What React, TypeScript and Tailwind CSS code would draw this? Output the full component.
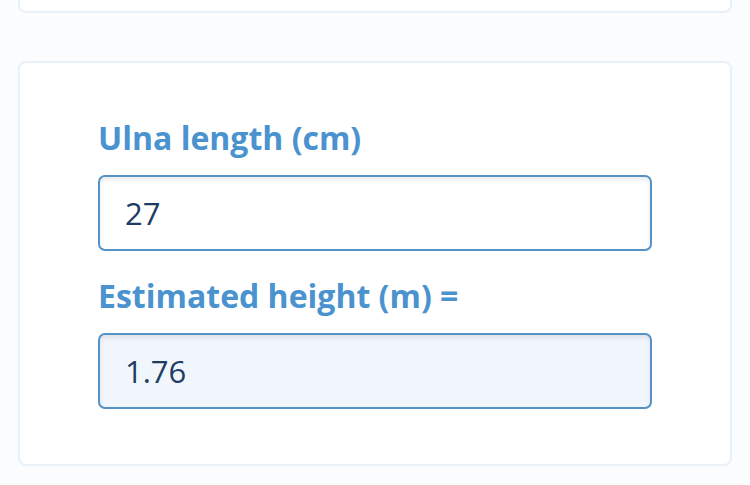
import React from "react";

export default function App() {
  return (
    <div className="w-[750px] h-[485px] overflow-hidden bg-[#fbfcfd] px-[18px]" style={{ fontFamily: '"Open Sans", sans-serif' }}>
      <div className="h-[13px] rounded-b-[8px] border-2 border-t-0 border-[#e9f1f8] bg-white" />
      <div className="mt-[48px] h-[405px] rounded-[8px] border-2 border-[#e9f1f8] bg-white px-[78px] pt-[53px]">
        <label className="block text-[32px] font-bold leading-[44px] text-[#4a93cf]">Ulna length (cm)</label>
        <div className="mt-[15px] flex h-[76px] items-center rounded-[7px] border-2 border-[#5592c6] bg-white px-[25px] text-[31px] text-[#1e3c64] shadow-[inset_0_3px_4px_rgba(0,0,0,0.08)]">
          27
        </div>
        <label className="mt-[23px] block text-[32px] font-bold leading-[44px] text-[#4a93cf]">Estimated height (m) =</label>
        <div className="mt-[15px] flex h-[76px] items-center rounded-[7px] border-2 border-[#5592c6] bg-[#f0f6fb] px-[25px] text-[31px] text-[#1e3c64] shadow-[inset_0_3px_4px_rgba(0,0,0,0.08)]">
          1.76
        </div>
      </div>
    </div>
  );
}
